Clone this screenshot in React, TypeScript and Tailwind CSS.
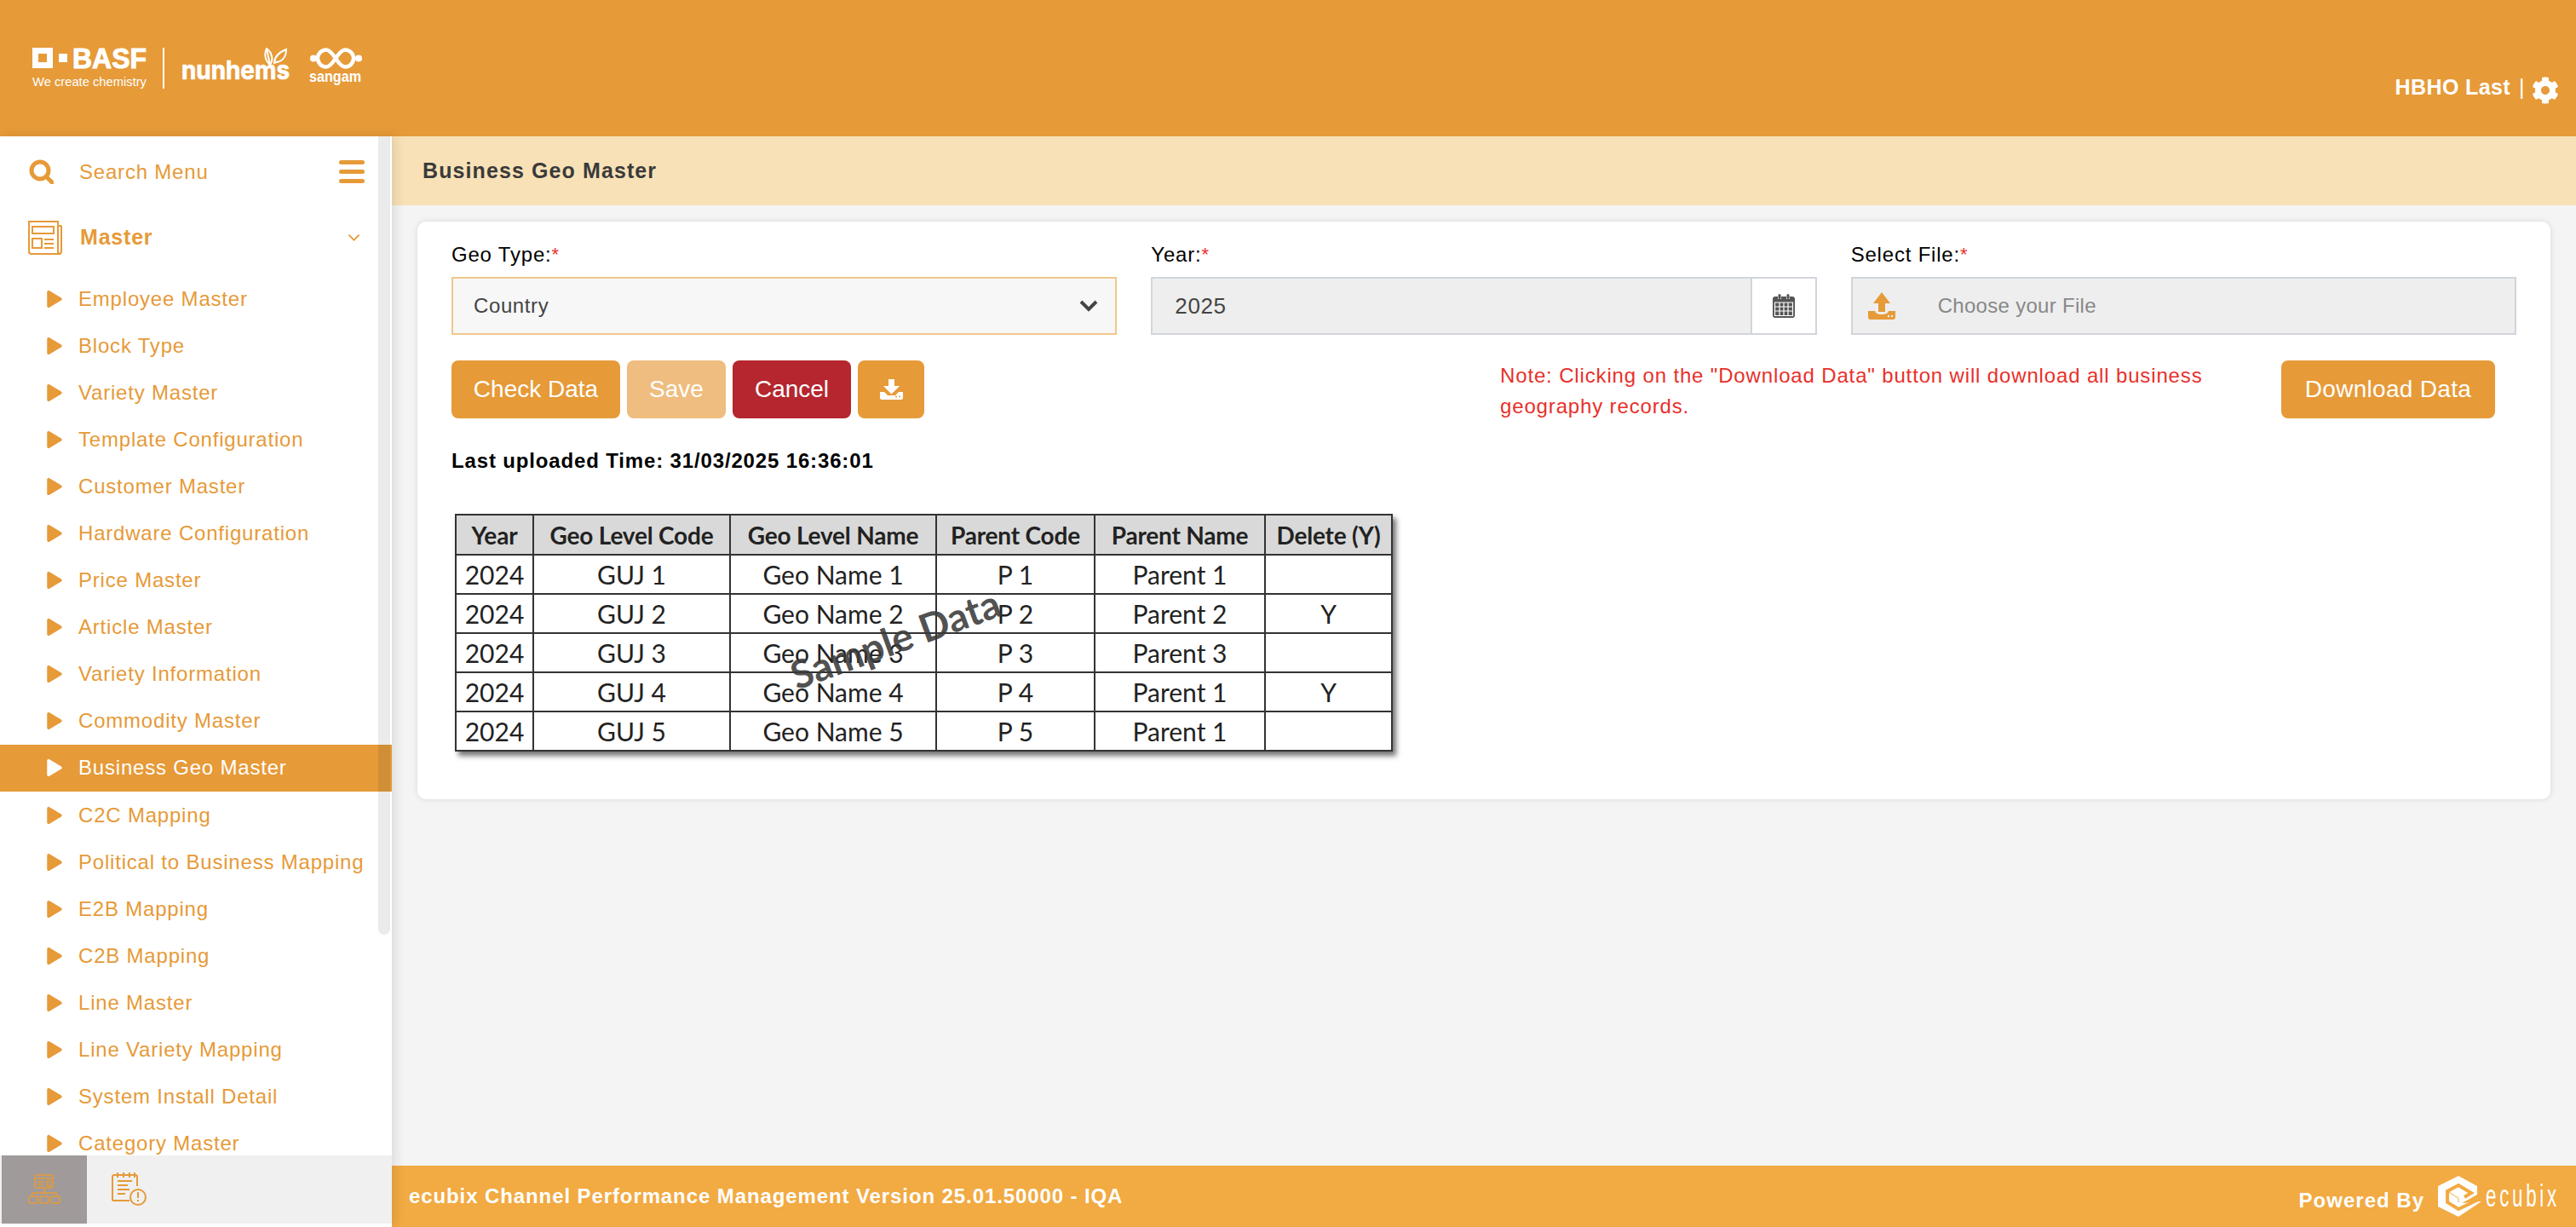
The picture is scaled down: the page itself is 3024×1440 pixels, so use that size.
import { FaCog, FaPlay } from "react-icons/fa";

const menuItems = [
  "Employee Master",
  "Block Type",
  "Variety Master",
  "Template Configuration",
  "Customer Master",
  "Hardware Configuration",
  "Price Master",
  "Article Master",
  "Variety Information",
  "Commodity Master",
  "Business Geo Master",
  "C2C Mapping",
  "Political to Business Mapping",
  "E2B Mapping",
  "C2B Mapping",
  "Line Master",
  "Line Variety Mapping",
  "System Install Detail",
  "Category Master",
];

const sampleRows = [
  ["2024", "GUJ 1", "Geo Name 1", "P 1", "Parent 1", ""],
  ["2024", "GUJ 2", "Geo Name 2", "P 2", "Parent 2", "Y"],
  ["2024", "GUJ 3", "Geo Name 3", "P 3", "Parent 3", ""],
  ["2024", "GUJ 4", "Geo Name 4", "P 4", "Parent 1", "Y"],
  ["2024", "GUJ 5", "Geo Name 5", "P 5", "Parent 1", ""],
];

const tableHeads = ["Year", "Geo Level Code", "Geo Level Name", "Parent Code", "Parent Name", "Delete (Y)"];

const BrandLogo = () => (
  <svg width="400" height="60" viewBox="0 0 400 60" fill="#fff">
    <path fillRule="evenodd" d="M0 0h24v24H0z M7 7v10h10V7z" />
    <rect x="31" y="7" width="10" height="10" />
    <text x="47" y="24" fontFamily="Liberation Sans" fontWeight="700" fontSize="33" textLength="87" lengthAdjust="spacingAndGlyphs" stroke="#fff" strokeWidth="1">BASF</text>
    <text x="0" y="45" fontFamily="Liberation Sans" fontSize="15" textLength="134" lengthAdjust="spacingAndGlyphs">We create chemistry</text>
    <rect x="153" y="0" width="2" height="48" />
    <text x="175" y="37" fontFamily="Inter" fontWeight="700" fontSize="30" textLength="127" lengthAdjust="spacingAndGlyphs" stroke="#fff" strokeWidth="0.7">nunhems</text>
    <g fill="none" stroke="#fff" strokeWidth="2">
      <path d="M275 1c-3 6-2 14 4 19 4-5 3-14-4-19z" />
      <path d="M275 1l4 19" />
      <path d="M284 18c0-6 4-12 14-16 0 8-4 14-12 15z" />
    </g>
    <path
      fill="none"
      stroke="#fff"
      strokeWidth="4.5"
      d="M356 12.5C351 5 347 2.5 345 2.5a10 10 0 0 0 0 20c2 0 6-2.5 11-10c5-7.5 9-10 11-10a10 10 0 0 1 0 20c-2 0-6-2.5-11-10z"
    />
    <circle cx="330" cy="12.5" r="4" />
    <circle cx="383" cy="12.5" r="4" />
    <text x="325" y="40" fontFamily="Liberation Sans" fontWeight="700" fontSize="19" textLength="61" lengthAdjust="spacingAndGlyphs">sangam</text>
  </svg>
);

const SearchIcon = () => (
  <svg width="29" height="29" viewBox="0 0 29 29" fill="none" stroke="#E69A38" strokeWidth="5" strokeLinecap="round">
    <circle cx="13" cy="13" r="10" />
    <path d="M21 21l6 6" />
  </svg>
);

const NewspaperIcon = () => (
  <svg width="40" height="40" viewBox="0 0 40 40" fill="none" stroke="#E69A38" strokeWidth="2">
    <path d="M35 6h3a1 1 0 0 1 1 1v29a3 3 0 0 1-3 3H4a3 3 0 0 1-3-3V1h34v35a3 3 0 0 0 3 3" />
    <rect x="5" y="7" width="25" height="8" />
    <rect x="5" y="21" width="11" height="11" />
    <path d="M19 22h11M19 27h11M19 32h11" />
  </svg>
);

const ChevronIcon = ({ w, h, sw, color }: { w: number; h: number; sw: number; color: string }) => (
  <svg width={w} height={h} viewBox="0 0 22 14" fill="none" stroke={color} strokeWidth={sw}>
    <path d="M2 2l9 9 9-9" />
  </svg>
);

const CalendarIcon = () => (
  <svg width="26" height="28" viewBox="0 0 26 28" fill="#555">
    <path d="M3 3h3v3h4V3h6v3h4V3h3a3 3 0 0 1 3 3v19a3 3 0 0 1-3 3H3a3 3 0 0 1-3-3V6a3 3 0 0 1 3-3z" />
    <rect x="6.5" y="0" width="3" height="6" rx="1.5" />
    <rect x="16.5" y="0" width="3" height="6" rx="1.5" />
    <path fill="none" stroke="#fff" strokeWidth="1.2" d="M2.5 10h21v15.5h-21zM2.5 15h21M2.5 20h21M8 10v15.5M13 10v15.5M18 10v15.5" />
  </svg>
);

const OrgIcon = () => (
  <svg width="38" height="36" viewBox="0 0 38 36" fill="none" stroke="#E69A38" strokeWidth="1.5">
    <rect x="8" y="1" width="21" height="15" rx="2" />
    <path d="M8 5h21M11 9h7M11 12h7M19 16v6M5 25v-3h28v3" />
    <rect x="22" y="8" width="4" height="6" rx="1" />
    <rect x="1" y="26" width="10" height="8" rx="2" />
    <rect x="14" y="26" width="10" height="8" rx="2" />
    <rect x="27" y="26" width="10" height="8" rx="2" />
  </svg>
);

const NotesIcon = () => (
  <svg width="42" height="42" viewBox="0 0 42 42" fill="none" stroke="#E69A38" strokeWidth="2">
    <path d="M21 34H2a1 1 0 0 1-1-1V6a2 2 0 0 1 2-2h25a2 2 0 0 1 2 2v11" />
    <path d="M7 1v6M14 1v6M21 1v6M27 1v6M7 11h17M7 16h12M7 21h14M7 26h9" />
    <circle cx="31" cy="30" r="9" />
    <path d="M31 24v7M31 33v2" />
  </svg>
);

const DownloadTray = () => (
  <svg width="27" height="24" viewBox="0 0 27 24" fill="#fff">
    <path d="M10 0h7v8h6l-9.500 9.500L4 8h6z" />
    <path d="M0 15h5l4 4h9l4-4h5v7a2 2 0 0 1-2 2H2a2 2 0 0 1-2-2z" />
    <circle cx="19" cy="20.500" r="1" fill="#E69A38" />
    <circle cx="23" cy="20.500" r="1" fill="#E69A38" />
  </svg>
);

const UploadTray = () => (
  <svg width="32" height="32" viewBox="0 0 32 32" fill="#E69A38">
    <path d="M16 0l10 13h-6v10h-8V13H6z" />
    <path d="M0 22h8c1 3 4 4 8 4s7-1 8-4h8v7a3 3 0 0 1-3 3H3a3 3 0 0 1-3-3z" />
    <circle cx="24" cy="28" r="1.200" fill="#eee" />
    <circle cx="28" cy="28" r="1.200" fill="#eee" />
  </svg>
);

const EcubixMark = () => (
  <svg width="51" height="48" viewBox="0 0 51 48">
    <path fill="#fff" d="M24 0l22 12v10L28 32l23-2-27 18L0 36V12z" />
    <path fill="none" stroke="#F2AA42" strokeWidth="4" d="M31 25l8-5-15-9-13 7v13l13 8 21-10" />
    <path fill="none" stroke="#F2AA42" strokeWidth="1" d="M11 18l13 8v5" />
  </svg>
);

const Label = ({ text }: { text: string }) => (
  <label className="block h-[45px] text-[24px] tracking-[0.8px] text-black leading-[37px]">
    {text}
    <span className="text-[#E8302A] text-[22px] align-top">*</span>
  </label>
);

const SampleTable = () => (
  <div className="relative w-[1101px] ml-[4px] mt-[46px] shadow-[4px_5px_6px_rgba(0,0,0,0.55)]">
    <table className="w-full border-collapse border-2 border-[#222] font-['Lato',sans-serif] text-[#222] text-[30px] table-fixed">
      <colgroup>
        <col className="w-[91px]" />
        <col className="w-[231px]" />
        <col className="w-[242px]" />
        <col className="w-[186px]" />
        <col className="w-[200px]" />
        <col />
      </colgroup>
      <thead>
        <tr className="h-[47px] bg-[#d9d9d9] text-[#222]">
          {tableHeads.map((h) => (
            <th key={h} className="border-2 border-[#333] font-bold text-[28px] p-0 whitespace-nowrap tracking-[-0.2px]">
              {h}
            </th>
          ))}
        </tr>
      </thead>
      <tbody>
        {sampleRows.map((row, i) => (
          <tr key={i} className="h-[46px] bg-white">
            {row.map((c, j) => (
              <td key={j} className="border-2 border-[#333] text-center p-0 leading-none">
                {c}
              </td>
            ))}
          </tr>
        ))}
      </tbody>
    </table>
    <div className="absolute left-[388px] top-[124px] -rotate-[20deg] font-['Lato',sans-serif] font-bold text-[46px] leading-none text-[#3a3a3a]/90 whitespace-nowrap">
      Sample Data
    </div>
  </div>
);

export default function App() {
  return (
    <div className="w-[3024px] h-[1440px] flex flex-col bg-[#f4f4f4] font-['Liberation_Sans',Arial,sans-serif] overflow-hidden">
      <header className="h-[160px] shrink-0 bg-[#E69A38] flex items-start justify-between pl-[38px] pr-[20px] pt-[56px]">
        <BrandLogo />
        <div className="flex items-center mt-[28px] text-white text-[25px] font-bold tracking-[0.4px]">
          HBHO Last
          <span className="ml-[10px] font-normal">|</span>
          <FaCog className="ml-[8px] mt-[6px] w-[32px] h-[32px]" />
        </div>
      </header>
      <div className="flex-1 min-h-0 flex">
        <aside className="relative z-10 w-[460px] shrink-0 bg-white text-[#E69A38] flex flex-col shadow-[4px_0_12px_rgba(0,0,0,0.1)]">
          <div className="relative flex-1 min-h-0 overflow-hidden">
            <div className="absolute right-[2px] top-0 h-[937px] w-[14px] bg-[#ebebeb] rounded-b-full" />
            <div className="h-[82px] mr-[16px] flex items-center pl-[34px] pr-[16px]">
              <SearchIcon />
              <span className="ml-[30px] mt-[2px] text-[24px] tracking-[0.8px] flex-1">Search Menu</span>
              <div className="flex flex-col gap-[6px] w-[30px]">
                <span className="h-[5px] rounded-full bg-[#E69A38]" />
                <span className="h-[5px] rounded-full bg-[#E69A38]" />
                <span className="h-[5px] rounded-full bg-[#E69A38]" />
              </div>
            </div>
            <div className="h-[74px] mr-[16px] flex items-center pl-[33px] pr-[21px]">
              <NewspaperIcon />
              <span className="ml-[21px] text-[25px] font-bold tracking-[0.8px] flex-1">Master</span>
              <ChevronIcon w={15} h={10} sw={2.500} color="#E69A38" />
            </div>
            <ul className="relative pt-[7px]">
              {menuItems.map((m) => (
                <li
                  key={m}
                  className={
                    m === "Business Geo Master"
                      ? "relative h-[55.1px] flex items-center pl-[54px] bg-[#E69A38] text-white text-[24px] tracking-[0.8px] whitespace-nowrap"
                      : "h-[55.1px] flex items-center pl-[54px] text-[24px] tracking-[0.8px] whitespace-nowrap"
                  }
                >
                  <FaPlay className="w-[20px] h-[20px] shrink-0" />
                  <span className="ml-[18px]">{m}</span>
                  {m === "Business Geo Master" && (
                    <span className="absolute right-[2px] top-0 bottom-0 w-[14px] bg-[#D08F36]" />
                  )}
                </li>
              ))}
            </ul>
          </div>
          <div className="h-[80px] mb-[4px] shrink-0 bg-[#f0f0f0] flex pl-[2px]">
            <div className="w-[100px] bg-[#a09b9a] flex items-center justify-center">
              <OrgIcon />
            </div>
            <div className="w-[100px] flex items-center justify-center">
              <NotesIcon />
            </div>
          </div>
        </aside>
        <main className="flex-1 min-w-0 flex flex-col">
          <div className="h-[81px] shrink-0 bg-[#F8E1B6] flex items-center pl-[36px] text-[25px] font-bold text-[#3a3a3a] tracking-[1.1px]">
            Business Geo Master
          </div>
          <section className="mx-[30px] mt-[19px] h-[678px] bg-white rounded-[10px] shadow-[0_0_6px_rgba(0,0,0,0.12)] pl-[40px] pr-[40px] pt-[20px]">
            <div className="grid grid-cols-3 gap-x-[40px]">
              <div>
                <Label text="Geo Type:" />
                <div className="h-[68px] border-2 border-[#F0C88A] bg-[#f7f7f7] flex items-center justify-between pl-[24px] pr-[20px] text-[24px] tracking-[0.6px] text-[#444]">
                  Country
                  <ChevronIcon w={22} h={14} sw={4} color="#444" />
                </div>
              </div>
              <div>
                <Label text="Year:" />
                <div className="h-[68px] border-2 border-[#d1d5db] bg-[#eeeeee] flex items-center text-[26px] tracking-[0.6px] text-[#444]">
                  <span className="flex-1 pl-[26px]">2025</span>
                  <span className="w-[76px] h-full bg-white border-l-2 border-[#d1d5db] flex items-center justify-center">
                    <CalendarIcon />
                  </span>
                </div>
              </div>
              <div>
                <Label text="Select File:" />
                <div className="h-[68px] border-2 border-[#d1d5db] bg-[#eeeeee] flex items-center pl-[18px] text-[24px] tracking-[0.3px] text-[#888]">
                  <UploadTray />
                  <span className="ml-[50px]">Choose your File</span>
                </div>
              </div>
            </div>
            <div className="flex items-start mt-[30px]">
              <div className="flex gap-[8px] w-[1231px] shrink-0 text-white text-[28px]">
                <button className="h-[68px] w-[198px] rounded-[8px] bg-[#E69A38]">Check Data</button>
                <button className="h-[68px] w-[116px] rounded-[8px] bg-[#EFBD7F]">Save</button>
                <button className="h-[68px] w-[139px] rounded-[8px] bg-[#B5262E]">Cancel</button>
                <button className="h-[68px] w-[78px] rounded-[8px] bg-[#E69A38] flex items-center justify-center">
                  <DownloadTray />
                </button>
              </div>
              <p className="w-[860px] shrink-0 text-[24px] tracking-[0.85px] leading-[36px] text-[#E8302A]">
                Note: Clicking on the "Download Data" button will download all business geography records.
              </p>
              <button className="ml-[57px] h-[68px] w-[251px] rounded-[8px] bg-[#E69A38] text-white text-[28px] tracking-[0.3px]">
                Download Data
              </button>
            </div>
            <div className="mt-[30px] text-[24px] font-bold tracking-[0.85px] text-black leading-[32px]">
              Last uploaded Time: 31/03/2025 16:36:01
            </div>
            <SampleTable />
          </section>
          <div className="flex-1" />
          <footer className="h-[72px] shrink-0 bg-[#F2AA42] flex items-center justify-between pl-[20px] pr-[20px] text-white font-bold">
            <span className="text-[24px] tracking-[0.9px]">ecubix Channel Performance Management Version 25.01.50000 - IQA</span>
            <div className="flex items-center">
              <span className="text-[24px] tracking-[1px] mt-[10px]">Powered By</span>
              <span className="ml-[16px]">
                <EcubixMark />
              </span>
              <span className="ml-[5px] font-normal text-[36px] tracking-[6px] leading-none [transform:scaleX(0.62)] origin-left w-[86px]">ecubix</span>
            </div>
          </footer>
        </main>
      </div>
    </div>
  );
}
